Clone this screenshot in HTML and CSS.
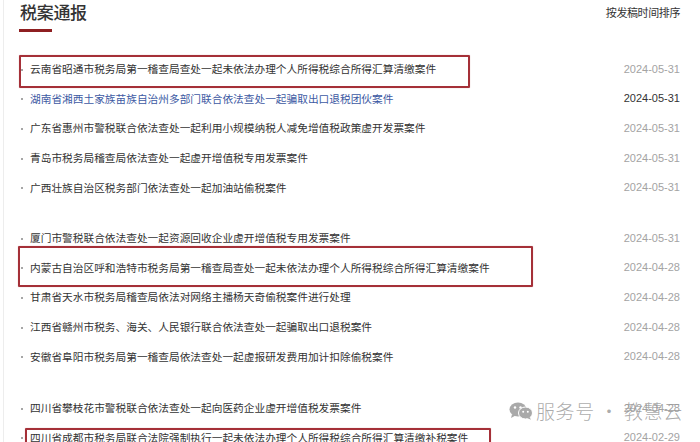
FILE: index.html
```html
<!DOCTYPE html>
<html lang="zh-CN">
<head>
<meta charset="utf-8">
<title>税案通报</title>
<link rel="stylesheet" href="styles.css">
</head>
<body>
<div class="page">
  <header class="head">
    <div class="title-wrap">
      <h1 class="title">税案通报</h1>
      <div class="title-bar"></div>
    </div>
    <div class="sort">按发稿时间排序</div>
  </header>

  <ul class="group">
    <li class="row"><span class="text">云南省昭通市税务局第一稽查局查处一起未依法办理个人所得税综合所得汇算清缴案件</span><span class="date">2024-05-31</span><div class="mark mark1"></div></li>
    <li class="row row-active"><span class="text">湖南省湘西土家族苗族自治州多部门联合依法查处一起骗取出口退税团伙案件</span><span class="date">2024-05-31</span></li>
    <li class="row"><span class="text">广东省惠州市警税联合依法查处一起利用小规模纳税人减免增值税政策虚开发票案件</span><span class="date">2024-05-31</span></li>
    <li class="row"><span class="text">青岛市税务局稽查局依法查处一起虚开增值税专用发票案件</span><span class="date">2024-05-31</span></li>
    <li class="row"><span class="text">广西壮族自治区税务部门依法查处一起加油站偷税案件</span><span class="date">2024-05-31</span></li>
  </ul>

  <ul class="group">
    <li class="row"><span class="text">厦门市警税联合依法查处一起资源回收企业虚开增值税专用发票案件</span><span class="date">2024-05-31</span></li>
    <li class="row"><span class="text">内蒙古自治区呼和浩特市税务局第一稽查局查处一起未依法办理个人所得税综合所得汇算清缴案件</span><span class="date">2024-04-28</span><div class="mark mark2"></div></li>
    <li class="row"><span class="text">甘肃省天水市税务局稽查局依法对网络主播杨天奇偷税案件进行处理</span><span class="date">2024-04-28</span></li>
    <li class="row"><span class="text">江西省赣州市税务、海关、人民银行联合依法查处一起骗取出口退税案件</span><span class="date">2024-04-28</span></li>
    <li class="row"><span class="text">安徽省阜阳市税务局第一稽查局依法查处一起虚报研发费用加计扣除偷税案件</span><span class="date">2024-04-28</span></li>
  </ul>

  <ul class="group">
    <li class="row"><span class="text">四川省攀枝花市警税联合依法查处一起向医药企业虚开增值税发票案件</span><span class="date">2024-04-28</span></li>
    <li class="row"><span class="text">四川省成都市税务局联合法院强制执行一起未依法办理个人所得税综合所得汇算清缴补税案件</span><span class="date">2024-02-29</span><div class="mark mark3"></div></li>
  </ul>

  <div class="watermark">
    <svg class="wm-icon" width="24" height="18" viewBox="0 0 24 18" aria-hidden="true">
      <ellipse cx="9" cy="7.5" rx="8.5" ry="7" fill="#a9a9a9"/>
      <path d="M3 12.5 L2 16 L6.5 13.5 Z" fill="#a9a9a9"/>
      <circle cx="6" cy="5.5" r="1.2" fill="#fff"/>
      <circle cx="11.5" cy="5.5" r="1.2" fill="#fff"/>
      <ellipse cx="16.5" cy="11" rx="7" ry="6" fill="#a9a9a9" stroke="#fff" stroke-width="1"/>
      <path d="M20.5 15 L22 17.8 L18 16 Z" fill="#a9a9a9"/>
      <circle cx="14.2" cy="9.8" r="1" fill="#fff"/>
      <circle cx="18.8" cy="9.8" r="1" fill="#fff"/>
    </svg>
    <span class="wm-text">服务号 · 教慧云</span>
  </div>
</div>
</body>
</html>
```
FILE: styles.css
```css
* { box-sizing: border-box; }
html, body {
  margin: 0;
  padding: 0;
  background: #fff;
  overflow: hidden;
}
body {
  width: 700px;
  height: 442px;
  font-family: "Noto Sans CJK SC", "Liberation Sans", sans-serif;
  color: #333;
}
.page {
  position: relative;
  height: 442px;
  margin-left: 3px;
  border-left: 1px solid #ededed;
  padding: 1px 20px 0 16px;
}
.head {
  display: flex;
  justify-content: space-between;
  align-items: flex-start;
  height: 53px;
}
.title {
  margin: 0;
  font-size: 17px;
  line-height: 22px;
  font-weight: 500;
  color: #333;
  letter-spacing: -0.3px;
}
.title-bar {
  margin-top: 6px;
  margin-left: -1px;
  width: 33px;
  height: 3px;
  background: #8e1f21;
}
.sort {
  font-size: 11px;
  line-height: 14px;
  margin-top: 4px;
  color: #333;
  letter-spacing: -0.4px;
}
.group {
  list-style: none;
  margin: 0 0 22px 0;
  padding: 0;
}
.group:first-of-type { margin-bottom: 21px; }
.row {
  position: relative;
  display: flex;
  justify-content: space-between;
  align-items: center;
  height: 29.6px;
  padding-left: 10px;
  font-size: 10.7px;
}
.row::before {
  content: "";
  position: absolute;
  left: 1px;
  top: 50%;
  width: 2px;
  height: 2px;
  background: #888;
  border-radius: 50%;
}
.text {
  color: #333;
  white-space: nowrap;
}
.date {
  font-family: "Liberation Sans", Arial, sans-serif;
  font-size: 11px;
  color: #a3a3a3;
}
.row-active .text { color: #3d5aa3; }
.row-active .date { color: #333; }
.mark {
  position: absolute;
  border: 2px solid #a53038;
  border-radius: 1px;
  box-shadow: 0 0 1px rgba(165, 48, 56, 0.5);
  pointer-events: none;
}
.mark1 { left: -1px; top: 1px; width: 451px; height: 33px; }
.mark2 { left: -2px; top: -7px; width: 515px; height: 41px; }
.mark3 { left: 5px; top: 5px; width: 466px; height: 30px; }
.watermark {
  position: absolute;
  left: 505px;
  top: 400px;
  display: flex;
  align-items: center;
  gap: 3px;
  color: #a9a9a9;
}
.wm-text {
  font-size: 19px;
  line-height: 22px;
  font-weight: 300;
  letter-spacing: 0.6px;
  color: rgba(150, 150, 150, 0.8);
}
```
